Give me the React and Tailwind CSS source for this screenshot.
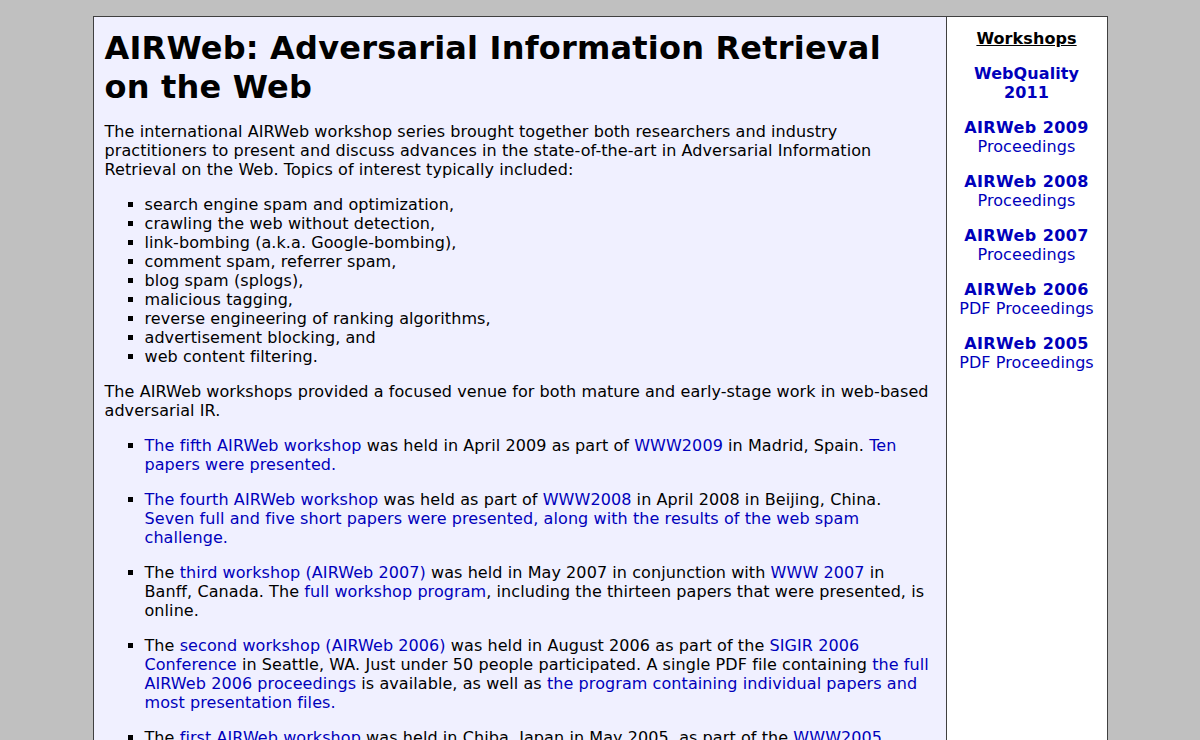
const topics = [
  "search engine spam and optimization,",
  "crawling the web without detection,",
  "link-bombing (a.k.a. Google-bombing),",
  "comment spam, referrer spam,",
  "blog spam (splogs),",
  "malicious tagging,",
  "reverse engineering of ranking algorithms,",
  "advertisement blocking, and",
  "web content filtering.",
];

const sideLinks = [
  { title: "AIRWeb 2009", sub: "Proceedings" },
  { title: "AIRWeb 2008", sub: "Proceedings" },
  { title: "AIRWeb 2007", sub: "Proceedings" },
  { title: "AIRWeb 2006", sub: "PDF Proceedings" },
  { title: "AIRWeb 2005", sub: "PDF Proceedings" },
];

function A({ children }) {
  return (
    <a href="#" className="text-[#0000bb] no-underline">
      {children}
    </a>
  );
}

export default function App() {
  return (
    <div
      className="min-h-[740px] bg-[#c0c0c0] pt-4 text-[16px] leading-[19px] tracking-[0.08px] text-black"
      style={{ fontFamily: '"DejaVu Sans", Verdana, sans-serif' }}
    >
      <div className="mx-auto flex w-[1015px] border border-[#404040] bg-[#f0f0ff]">
        {/* main column */}
        <div className="flex-1 px-[11px] pt-[12px] pb-6">
          <h1 className="mb-[15px] text-[32px] font-bold leading-[39px] tracking-[0.2px]">
            AIRWeb: Adversarial Information Retrieval on the Web
          </h1>
          <p>
            The international AIRWeb workshop series brought together both researchers and industry
            practitioners to present and discuss advances in the state-of-the-art in Adversarial
            Information Retrieval on the Web. Topics of interest typically included:
          </p>
          <ul className="my-4 list-[square] pl-10">
            {topics.map((t) => (
              <li key={t}>{t}</li>
            ))}
          </ul>
          <p>
            The AIRWeb workshops provided a focused venue for both mature and early-stage work in
            web-based adversarial IR.
          </p>
          <ul className="mt-4 list-[square] pl-10">
            <li className="mb-4">
              <A>The fifth AIRWeb workshop</A> was held in April 2009 as part of <A>WWW2009</A> in
              Madrid, Spain. <A>Ten papers were presented.</A>
            </li>
            <li className="mb-4">
              <A>The fourth AIRWeb workshop</A> was held as part of <A>WWW2008</A> in April 2008 in
              Beijing, China.{" "}
              <A>
                Seven full and five short papers were presented, along with the results of the web
                spam challenge.
              </A>
            </li>
            <li className="mb-4">
              The <A>third workshop (AIRWeb 2007)</A> was held in May 2007 in conjunction with{" "}
              <A>WWW 2007</A> in Banff, Canada. The <A>full workshop program</A>, including the
              thirteen papers that were presented, is online.
            </li>
            <li className="mb-4">
              The <A>second workshop (AIRWeb 2006)</A> was held in August 2006 as part of the{" "}
              <A>SIGIR 2006 Conference</A> in Seattle, WA. Just under 50 people participated. A
              single PDF file containing <A>the full AIRWeb 2006 proceedings</A> is available, as
              well as <A>the program containing individual papers and most presentation files.</A>
            </li>
            <li className="mb-4">
              The <A>first AIRWeb workshop</A> was held in Chiba, Japan in May 2005, as part of the{" "}
              <A>WWW2005 Conference</A>. The <A>workshop proceedings</A> are available online.
            </li>
          </ul>
        </div>

        {/* sidebar */}
        <div className="w-[161px] shrink-0 border-l border-[#404040] bg-white pt-[12px] text-center">
          <p className="font-bold underline">Workshops</p>
          <p className="my-4 font-bold">
            <A>
              WebQuality
              <br />
              2011
            </A>
          </p>
          {sideLinks.map((s) => (
            <p key={s.title} className="my-4">
              <a href="#" className="font-bold tracking-[0.4px] text-[#0000bb]">
                {s.title}
              </a>
              <br />
              <A>{s.sub}</A>
            </p>
          ))}
        </div>
      </div>
    </div>
  );
}
